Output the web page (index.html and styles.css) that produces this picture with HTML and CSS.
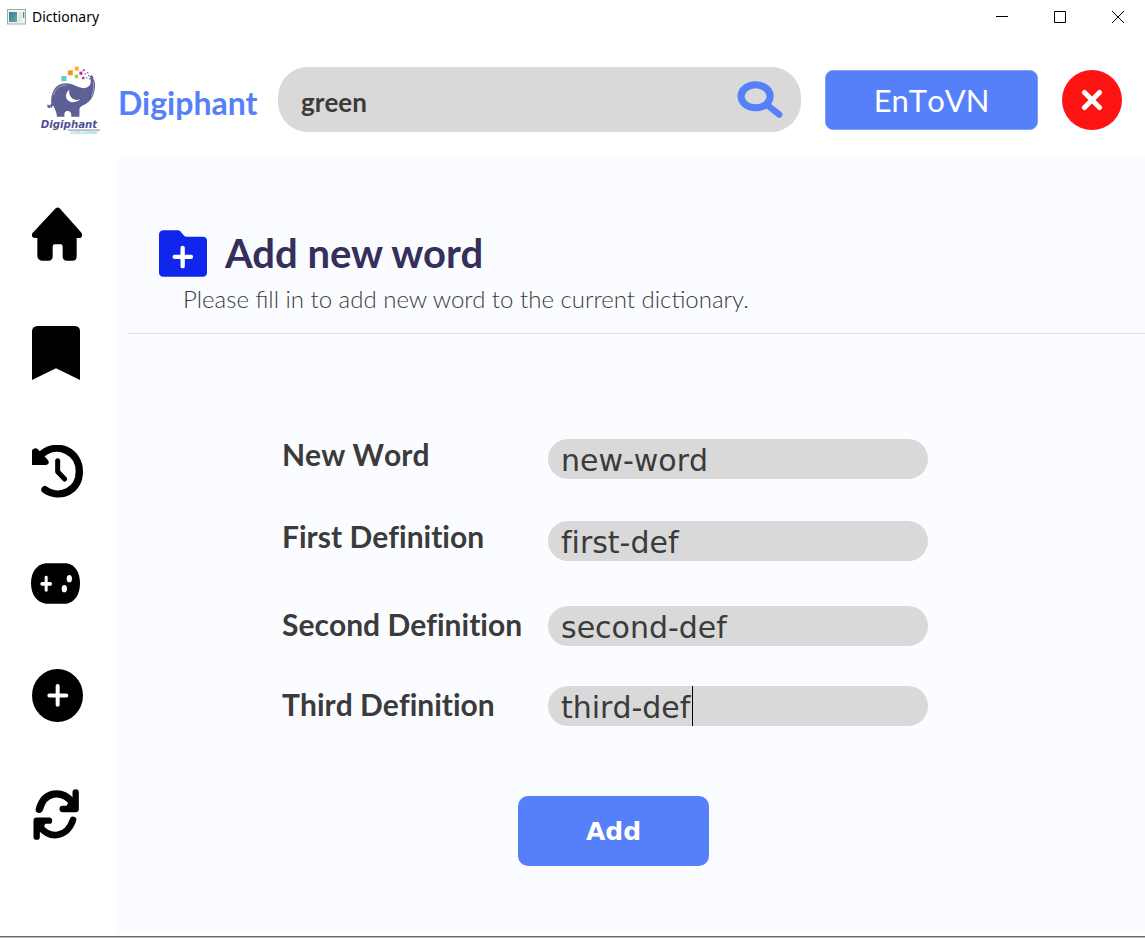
FILE: index.html
```html
<!DOCTYPE html>
<html lang="en">
<head>
<meta charset="utf-8">
<meta name="viewport" content="width=device-width, initial-scale=1">
<title>Dictionary</title>
<link rel="stylesheet" href="styles.css">
</head>
<body>
<div class="window">
  <div class="titlebar">
    <svg class="app-icon" viewBox="0 0 19 16" aria-hidden="true">
      <defs><linearGradient id="screen" x1="0" y1="0" x2="1" y2="1"><stop offset="0" stop-color="#3f72a8"/><stop offset="1" stop-color="#5fb58a"/></linearGradient></defs>
      <rect x=".5" y=".5" width="18" height="14.5" fill="#f3f3f5" stroke="#a3a7ad"/>
      <rect x="2" y="3" width="8" height="10" fill="url(#screen)"/>
      <rect x="11" y="3" width="4" height="10" fill="#e3e5e8"/>
      <rect x="16" y="3" width="1.3" height="6" fill="#4a8a9c"/>
    </svg>
    <span class="app-title">Dictionary</span>
    <div class="window-controls">
      <button type="button" aria-label="Minimize"><svg viewBox="0 0 12 12"><path d="M0 5.5h12"/></svg></button>
      <button type="button" aria-label="Maximize"><svg viewBox="0 0 12 12"><path d="M.5.5h11v11H.5z"/></svg></button>
      <button type="button" aria-label="Close"><svg viewBox="0 0 12 12"><path d="M0 0l12 12M12 0L0 12"/></svg></button>
    </div>
  </div>

  <header class="header">
    <div class="brand">
      <svg class="logo" viewBox="30 28 190 212" aria-hidden="true">
        <g fill="#5f5f98">
          <path d="M62 158C60 151 61 147 64 144C62 126 67 105 80 93C94 81 112 81 128 87C142 93 154 99 166 98C181 95 186 84 182 70L184 62C195 70 199 86 195 104C192 124 182 140 162 149C153 153 148 158 149 166L149 185H124C126 175 122 167 113 167C105 167 102 174 104 185H81C80 172 76 163 69 151L64 158Z"/>
          <path d="M52 148l9 3-1 8-8-2zM180 62l7-3 5 7-7 5z"/>
        </g>
        <path d="M118 103C103 116 106 136 124 140C136 142 146 138 151 132C134 138 116 128 118 103Z" fill="#fff"/>
        <path d="M71 119C76 98 92 88 110 89M191 80Q196 104 186 123" fill="none" stroke="#fff" stroke-width="1.5" opacity=".8"/>
        <path fill="#66cbd0" d="M94 61h16v16H94z"/>
        <path fill="#f7941e" d="M114 44h15v15h-15z"/>
        <path fill="#fbb51f" d="M135 33h12v12h-12z"/>
        <path fill="#a4cf46" d="M135 57h10v11h-10z"/>
        <path fill="#e91e85" d="M149 48h9v10h-9z"/>
        <path fill="#a42d92" d="M157 64h7v7h-7z"/>
        <path fill="#6b68a0" d="M159 41h6v6h-6zM165 52h4v4h-4zM172 49h4v4h-4zM169 65h4v4h-4zM175 58h4v4h-4zM178 67h4v4h-4z"/>
        <text class="logo-name" x="32" y="219" fill="#4f5094">Digiphant</text>
        <path d="M114 225h98" stroke="#8584b8" stroke-width="3"/>
        <text class="logo-tag" x="122" y="237" fill="#7fd0dc">DIGITAL ELEPHANT</text>
      </svg>
      <span class="brand-name">Digiphant</span>
    </div>
    <form class="search" role="search">
      <input type="text" value="green" aria-label="Search word">
      <button type="button" aria-label="Search">
        <svg viewBox="1357 91 136 109"><ellipse cx="1412" cy="136" rx="43" ry="34" fill="none" stroke="#5680fa" stroke-width="21"/><path d="M1448 163l34 27" fill="none" stroke="#5680fa" stroke-width="19" stroke-linecap="round"/></svg>
      </button>
    </form>
    <button class="language" type="button">EnToVN</button>
    <button class="exit" type="button" aria-label="Exit">
      <svg viewBox="0 0 22 22"><path d="M3.5 3.5l15 15M18.500 3.500l-15 15"/></svg>
    </button>
  </header>

  <div class="body">
    <nav class="sidebar" aria-label="Main">
      <button type="button" aria-label="Home"><svg width="54" height="54" viewBox="90 51 162 162"><path d="M167 55Q173 50 179 55L243 127Q250 135 243 143Q240 145 230 144V200Q229 212 218 212H200Q189 211 188 200V170Q188 163 182 163H164Q158 163 158 170V200Q157 211 146 212H126Q113 211 112 198V144Q102 145 98 142Q94 136 97 130Z"/></svg></button>
      <button type="button" aria-label="Bookmarks"><svg width="54" height="54" viewBox="90 408 162 162"><path d="M96 422Q98 409 112 408H225Q240 409 240 424V570L168 535L96 570Z"/></svg></button>
      <button type="button" aria-label="History"><svg width="54" height="53" viewBox="90 765 162 159"><path d="M128 790C175 755 238 785 238 844C238 902 181 930 135 899" fill="none" stroke="#000" stroke-width="22" stroke-linecap="round"/><path d="M96 781Q105 770 115 779L143 809Q152 821 138 825H96Z"/><path d="M173 812V845L194 867" fill="none" stroke="#000" stroke-width="15" stroke-linecap="round" stroke-linejoin="round"/></svg></button>
      <button type="button" aria-label="Games"><svg width="54" height="41" viewBox="90 68 162 123"><path d="M137 69H200C224 73 240 95 240 129C240 163 224 186 200 190H137C110 186 93 163 93 129C93 95 110 73 137 69Z"/><g fill="#fff"><rect x="134" y="106" width="9" height="48" rx="4"/><rect x="121" y="125" width="35" height="11" rx="5"/><ellipse cx="208" cy="115" rx="8" ry="11"/><ellipse cx="193" cy="145" rx="8" ry="11"/></g></svg></button>
      <button type="button" aria-label="Add word"><svg width="54" height="53" viewBox="90 387 162 159"><ellipse cx="172.500" cy="466.500" rx="76.500" ry="79.500"/><path d="M173 438v56M148 466.500h51" stroke="#fff" stroke-width="12" stroke-linecap="round"/></svg></button>
      <button type="button" aria-label="Refresh"><svg width="54" height="57" viewBox="90 741 162 171"><g fill="none" stroke="#000" stroke-width="19" stroke-linecap="round" stroke-linejoin="round"><path d="M118 808C133 752 185 750 217 786" stroke-width="22"/><path d="M219 840C200 894 150 897 121 862" stroke-width="20"/><path d="M227 757V807H188"/><path d="M110 890V842H147"/></g><path d="M195 806L212 775H227V806ZM110 875V842H140L125 875Z"/></svg></button>
    </nav>

    <main class="main">
      <div class="intro">
        <div class="heading">
          <svg class="folder" viewBox="87 60 144 140" aria-hidden="true"><path d="M99 60H144Q148 60 151 63L161 75Q165 80 170 80H219Q231 81 231 92V188Q230 199 219 200H99Q88 199 87 188V72Q88 61 99 60Z" fill="#1026ec"/><path d="M158 113v55M134 140h49" stroke="#fff" stroke-width="13" stroke-linecap="round"/></svg>
          <h1>Add new word</h1>
        </div>
        <p>Please fill in to add new word to the current dictionary.</p>
      </div>
      <form class="word-form">
        <div class="group group-primary">
          <div class="field"><label for="word">New Word</label><input id="word" type="text" value="new-word"></div>
          <div class="field"><label for="first">First Definition</label><input id="first" type="text" value="first-def"></div>
        </div>
        <div class="group group-extra">
          <div class="field"><label for="second">Second Definition</label><input id="second" type="text" value="second-def"></div>
          <div class="field"><label for="third">Third Definition</label><div class="active"><input id="third" type="text" value="third-def"><span class="caret"></span></div></div>
        </div>
        <button class="add" type="button">Add</button>
      </form>
    </main>
  </div>
</div>
</body>
</html>
```
FILE: styles.css
```css
* { box-sizing: border-box; }
body { margin: 0; background: #fff; color: #3b3b3b; font-family: Lato, sans-serif; }
button { border: 0; padding: 0; background: none; font: inherit; cursor: pointer; }
input { border: 0; outline: 0; font: inherit; color: inherit; min-width: 0; }
svg { display: block; }
h1, p { margin: 0; }

.window { min-height: 100vh; display: flex; flex-direction: column; border-bottom: 1px solid #b8b8b8; box-shadow: inset 0 -1px #686868; }

.titlebar { display: flex; align-items: center; height: 34px; padding-left: 7px; gap: 6px; }
.app-icon { width: 19px; height: 16px; }
.app-title { font-family: "Noto Sans", sans-serif; font-size: 14px; line-height: 20px; color: #000; }
.window-controls { display: flex; gap: 4px; margin-left: auto; }
.window-controls button { width: 54px; height: 34px; display: grid; place-items: center; }
.window-controls svg { width: 12px; height: 12px; fill: none; stroke: #000; stroke-width: 1; }

.header { display: flex; align-items: center; gap: 24px; height: 122px; padding: 9px 23px 0 40px; }
.brand { flex: none; display: flex; align-items: center; width: 214px; gap: 15px; }
.logo { flex: none; width: 63px; height: 70px; }
.logo-name { font: italic 700 31px "DejaVu Sans", sans-serif; }
.logo-tag { font: 700 9px Lato, sans-serif; }
.brand-name { padding-top: 6px; font-size: 32px; font-weight: 700; line-height: 40px; color: #5680fa; }
.search { flex: 1; min-width: 0; display: flex; align-items: center; height: 65px; padding: 0 18px 0 23px; border-radius: 30px; background: #d9d9d9; }
.search input { flex: 1; background: none; padding: 4px 0 0; font-size: 26px; font-weight: 700; font-kerning: none; }
.search svg { width: 46px; height: 37px; }
.language { flex: none; width: 213px; height: 60px; border: 1px solid #7d9dfb; border-radius: 8px; background: #5680fa; color: #fff; font-size: 31px; font-weight: 400; font-kerning: none; }
.exit { flex: none; display: grid; place-items: center; width: 60px; height: 60px; border-radius: 50%; background: #ff1414; }
.exit svg { width: 22px; height: 22px; fill: none; stroke: #fff; stroke-width: 5; stroke-linecap: round; }

.body { flex: 1; display: flex; padding-bottom: 4px; }
.sidebar { flex: none; display: flex; flex-direction: column; align-items: flex-start; gap: 65px; width: 117px; padding: 51px 0 0 30px; }
.main { flex: 1; min-width: 0; background: #fafcff; }

.intro { margin-left: 11px; padding: 73px 0 16px 31px; border-bottom: 1px solid #dfe1e4; }
.heading { display: flex; align-items: center; gap: 18px; height: 48px; }
.folder { width: 48px; height: 47px; }
.heading h1 { font-size: 40px; line-height: 48px; font-weight: 700; color: #352f5b; }
.intro p { margin: 4px 0 0 24px; font-size: 24px; line-height: 36px; font-weight: 300; }

.word-form { display: flex; flex-direction: column; align-items: flex-start; padding: 105px 24px 48px 165px; }
.group { display: flex; flex-direction: column; font-size: 30px; font-weight: 700; font-kerning: none; font-variant-ligatures: none; }
.group-primary { gap: 42px; line-height: 30px; margin-bottom: 45px; }
.group-extra { gap: 40px; line-height: 36px; }
.field { display: flex; align-items: flex-start; }
.field label { min-width: 266px; padding-right: 24px; white-space: nowrap; }
.field input { width: 380px; height: 40px; padding: 2px 13px 0; border-radius: 20px; background: #d9d9d9; font: 30px "DejaVu Sans", sans-serif; font-kerning: none; font-variant-ligatures: none; }
.active { position: relative; display: flex; }
.caret { position: absolute; left: 144px; top: 0; width: 1px; height: 40px; background: #000; }
.add { width: 191px; height: 70px; margin: 70px 0 0 236px; border-radius: 10px; background: #5680fa; color: #fff; font: 700 25px "DejaVu Sans", sans-serif; }
```
